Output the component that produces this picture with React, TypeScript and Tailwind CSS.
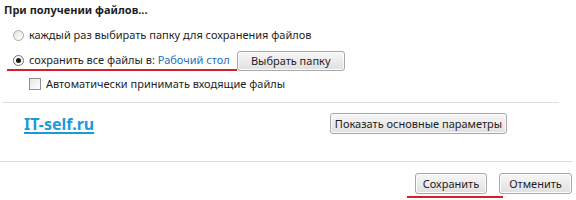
export default function App() {
    const btn =
        "h-[21px] whitespace-nowrap rounded-[3px] border border-[#a7a7a7] bg-gradient-to-b from-[#f7f7f7] to-[#e0e0e0] px-0 text-[11px] leading-none text-[#1e1e1e] shadow-[inset_0_0_0_1px_#fcfcfc]";

    return (
        <div
            className="w-[576px] h-[200px] bg-white text-[#1e1e1e] text-[11px] overflow-hidden"
            style={{ fontFamily: '"Noto Sans", "DejaVu Sans", sans-serif' }}
        >
            <div className="pl-[4px] pt-[2px] font-bold leading-[16px]">При получении файлов...</div>

            <div className="mt-[9px] flex items-center pl-[13px] h-[16px]">
                <span className="w-[11px] h-[11px] rounded-full border border-[#a9a9a9] bg-gradient-to-br from-[#e4e4e4] to-white" />
                <span className="ml-[5px]">каждый раз выбирать папку для сохранения файлов</span>
            </div>

            <div className="mt-[7px] flex items-center pl-[13px] h-[21px]">
                <span className="w-[11px] h-[11px] rounded-full border border-[#6f6f6f] bg-white flex items-center justify-center">
                    <span className="w-[5px] h-[5px] rounded-full bg-[#1a1a1a]" />
                </span>
                <span className="ml-[5px]">
                    сохранить все файлы в: <span className="text-[#1e6fb8]">Рабочий стол</span>
                </span>
                <button className={`${btn} ml-[7px] w-[108px] !h-[20px]`}>Выбрать папку</button>
            </div>
            <div className="ml-[7px] mt-[-2px] w-[230px] h-[2px] bg-[#d3202b]" />

            <div className="mt-[6px] flex items-center pl-[29px] h-[14px]">
                <span className="w-[12px] h-[12px] border border-[#8e8f8f] bg-gradient-to-br from-[#e6e6e6] to-white" />
                <span className="ml-[5px]">Автоматически принимать входящие файлы</span>
            </div>

            <div className="mt-[11px] ml-[3px] w-[556px] h-px bg-[#dcdfe0]" />

            <div className="mt-[10px] flex items-center justify-between pl-[24px] pr-[69px] h-[21px]">
                <a className="text-[16px] font-bold text-[#1b9ad8] underline underline-offset-2 decoration-2">IT-self.ru</a>
                <button className={`${btn} w-[177px]`}>Показать основные параметры</button>
            </div>

            <div className="mt-[27px] w-[572px] h-px bg-[#dadada]" />

            <div className="mt-[11px] flex justify-end gap-[12px] pr-[4px]">
                <button className={`${btn} w-[72px]`}>Сохранить</button>
                <button className={`${btn} w-[73px]`}>Отменить</button>
            </div>
            <div className="ml-[407px] mt-[2px] w-[96px] h-[2px] bg-[#d3202b]" />
        </div>
    );
}
